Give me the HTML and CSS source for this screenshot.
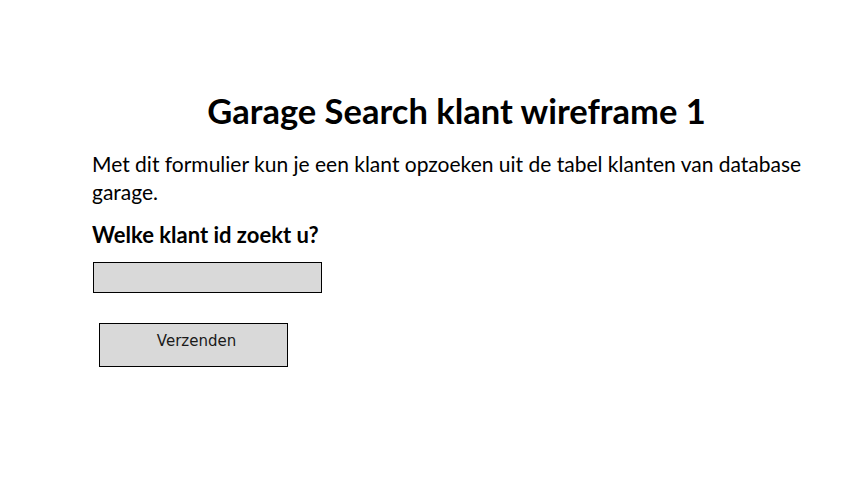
FILE: index.html
```html
<!DOCTYPE html>
<html lang="nl">
<head>
<meta charset="utf-8">
<title>Garage Search klant wireframe 1</title>
<link rel="stylesheet" href="styles.css">
</head>
<body>
<main class="slide">
  <h1 class="title">Garage Search klant wireframe 1</h1>
  <p class="intro">Met dit formulier kun je een klant opzoeken uit de tabel klanten van database garage.</p>
  <form class="form">
    <label class="label" for="klantid">Welke klant id zoekt u?</label>
    <input class="field" id="klantid" type="text">
    <button class="submit" type="button">Verzenden</button>
  </form>
</main>
</body>
</html>
```
FILE: styles.css
```css
html, body {
  margin: 0;
  padding: 0;
  background: #ffffff;
}
body {
  width: 863px;
  height: 477px;
  overflow: hidden;
  font-family: Lato, "Liberation Sans", Arial, sans-serif;
  color: #000;
}
.slide {
  display: flex;
  flex-direction: column;
  padding: 91px 0 0 92px;
  width: 729px;
}
.title {
  margin: 0;
  font-size: 34.5px;
  font-weight: bold;
  line-height: 40px;
  text-align: center;
}
.intro {
  margin: 19px 0 0 0;
  font-size: 21px;
  line-height: 28px;
}
.form {
  display: flex;
  flex-direction: column;
  align-items: flex-start;
}
.label {
  margin-top: 15px;
  font-size: 22px;
  font-weight: bold;
  line-height: 28px;
}
.field {
  box-sizing: border-box;
  margin: 13px 0 0 1px;
  width: 229px;
  height: 31px;
  border: 1px solid #000;
  background: #d9d9d9;
  padding: 0;
}
.submit {
  box-sizing: border-box;
  margin: 30px 0 0 7px;
  width: 189px;
  height: 44px;
  border: 1px solid #000;
  background: #d9d9d9;
  padding: 9px 0 0 6px;
  display: flex;
  justify-content: center;
  align-items: flex-start;
  font-family: "DejaVu Sans", sans-serif;
  font-size: 15px;
  line-height: 17px;
  color: #1a1a1a;
}
```
